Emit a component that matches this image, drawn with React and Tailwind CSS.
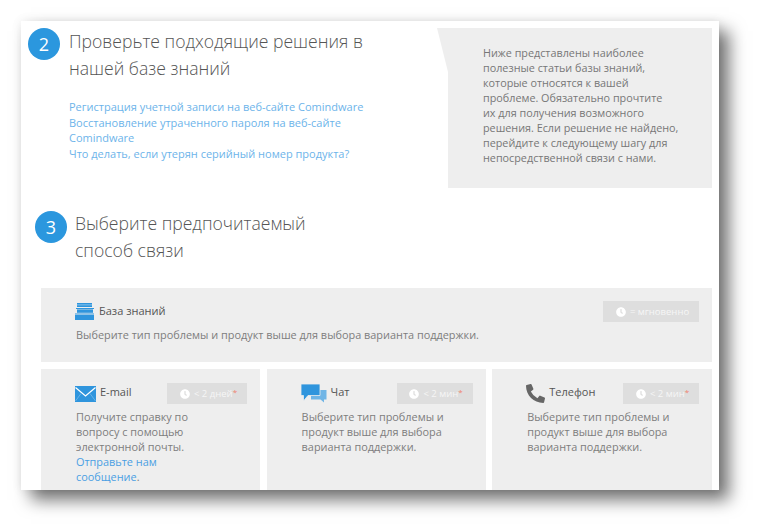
import React from "react";
import { FaClock, FaPhoneAlt } from "react-icons/fa";

const font = { fontFamily: '"Open Sans", sans-serif' };

function Step({ n, className }) {
  return (
    <div className={`w-8 h-8 shrink-0 rounded-full bg-[#2b97de] text-white flex items-center justify-center text-[18px] ${className || ""}`}>
      {n}
    </div>
  );
}

function Badge({ children, star, className }) {
  return (
    <div className={`h-[21px] bg-[#dedede] flex items-center justify-center gap-[4px] pl-[3px] text-[9.5px] text-[#f6f6f6] ${className || ""}`}>
      <FaClock className="w-[10px] h-[10px] text-white" />
      <span className="flex items-start leading-[14px]">
        {children}
        {star && <span className="text-[#f0836f] text-[8px] leading-[10px]">*</span>}
      </span>
    </div>
  );
}

function BooksIcon() {
  return (
    <svg width="20" height="17" viewBox="0 0 20 17" className="shrink-0">
      <rect x="2" y="0" width="15" height="4" fill="#2f95dd" />
      <rect x="2" y="1.5" width="15" height="0.8" fill="#9fd0f0" />
      <rect x="1" y="5" width="18" height="1" fill="#2f95dd" />
      <rect x="2" y="6.4" width="16" height="3.4" fill="#2f95dd" />
      <rect x="0" y="10.5" width="19" height="1" fill="#2f95dd" />
      <rect x="0" y="12" width="19" height="5" fill="#2f95dd" />
    </svg>
  );
}

function MailIcon() {
  return (
    <svg width="21" height="16" viewBox="0 0 21 16" className="shrink-0">
      <rect width="21" height="16" fill="#2f95dd" />
      <path d="M0.5 1.5 L10.5 10 L20.5 1.5" fill="none" stroke="#fff" strokeWidth="1.2" />
      <path d="M0.5 15 L6 7.5 M20.5 15 L15 7.5" stroke="#8cc6ec" strokeWidth="0.6" />
    </svg>
  );
}

function ChatIcon() {
  return (
    <svg width="26" height="19" viewBox="0 0 26 19" className="shrink-0">
      <path d="M10 6 H25.5 V15.5 H23 V18.5 L19.5 15.5 H10 Z" fill="#6fb5e6" />
      <path d="M0 0 H19 V11.5 H7 L2.5 17 V11.5 H0 Z" fill="#2f95dd" stroke="#eeeeee" strokeWidth="0.8" />
    </svg>
  );
}

function Option({ icon, title, badge, badgeWidth, titleGap, className, children }) {
  return (
    <div className={`bg-[#eeeeee] pl-[34px] pr-[13px] pt-[14px] ${className || ""}`}>
      <div className="flex items-center justify-between h-[21px]">
        <div className={`flex items-center ${titleGap}`}>
          {icon}
          <span className="text-[11px] text-[#555555] -mt-[2px]">{title}</span>
        </div>
        <Badge star className={badgeWidth}>{badge}</Badge>
      </div>
      <p className="mt-[5px] ml-px text-[10.9px] leading-[15px] text-[#7d7d7d]">{children}</p>
    </div>
  );
}

export default function App() {
  return (
    <div className="w-[761px] h-[532px] bg-white overflow-hidden pt-[21px] pl-[21px]" style={font}>
      <div className="w-[698px] h-[469px] bg-white overflow-hidden shadow-[10px_10px_16px_rgba(0,0,0,0.55),0_0_10px_rgba(0,0,0,0.08)]">
        <div className="flex justify-between pt-[7px] pl-[7px] pr-[7px]">
          <div className="flex">
            <Step n="2" />
            <div className="ml-[9px] w-[300px]">
              <h2 className="text-[17.6px] leading-[27px] font-light text-[#555555]">
                Проверьте подходящие решения в<br />нашей базе знаний
              </h2>
              <div className="mt-[17px] text-[11px] leading-[15.7px] text-[#6db4ea]">
                <div>Регистрация учетной записи на веб-сайте Comindware</div>
                <div>Восстановление утраченного пароля на веб-сайте<br />Comindware</div>
                <div>Что делать, если утерян серийный номер продукта?</div>
              </div>
            </div>
          </div>
          <div className="w-[275px] h-[160px] bg-[#eeeeee] pl-[46px] pt-[17px] [clip-path:polygon(0_0,100%_0,100%_100%,11px_100%,11px_44px)]">
            <p className="text-[10.8px] leading-[15px] text-[#777777]">
              Ниже представлены наиболее<br />
              полезные статьи базы знаний,<br />
              которые относятся к вашей<br />
              проблеме. Обязательно прочтите<br />
              их для получения возможного<br />
              решения. Если решение не найдено,<br />
              перейдите к следующему шагу для<br />
              непосредственной связи с нами.
            </p>
          </div>
        </div>

        <div className="flex mt-[23px] pl-[14px]">
          <Step n="3" />
          <h2 className="ml-[8px] -mt-[1px] text-[17.6px] leading-[27px] font-light text-[#555555]">
            Выберите предпочитаемый<br />способ связи
          </h2>
        </div>

        <div className="mt-[24px] ml-[20px] mr-[7px] flex flex-col gap-[7px]">
          <div className="bg-[#eeeeee] h-[74px] pl-[34px] pr-[13px] pt-[13px]">
            <div className="flex items-center justify-between h-[21px]">
              <div className="flex items-center gap-[4px]">
                <BooksIcon />
                <span className="text-[11px] text-[#555555]">База знаний</span>
              </div>
              <Badge className="w-[96px]">= мгновенно</Badge>
            </div>
            <p className="mt-[5px] ml-px text-[10.9px] leading-[15px] text-[#7d7d7d]">
              Выберите тип проблемы и продукт выше для выбора варианта поддержки.
            </p>
          </div>
          <div className="flex gap-[6.6px] h-[121px]">
            <Option className="w-[219px]" icon={<MailIcon />} title="E-mail" badge="< 2 дней" badgeWidth="w-[80px]" titleGap="gap-[4px]">
              Получите справку по<br />вопросу с помощью<br />электронной почты.<br />
              <span className="text-[#4a9fe3]">Отправьте нам<br />сообщение</span>.
            </Option>
            <Option className="w-[219px]" icon={<ChatIcon />} title="Чат" badge="< 2 мин" badgeWidth="w-[76px]" titleGap="gap-[4px]">
              Выберите тип проблемы и<br />продукт выше для выбора<br />варианта поддержки.
            </Option>
            <Option className="flex-1" icon={<FaPhoneAlt className="w-[19px] h-[19px] text-[#666666] shrink-0" />} title="Телефон" badge="< 2 мин" badgeWidth="w-[76px]" titleGap="gap-[4px]">
              Выберите тип проблемы и<br />продукт выше для выбора<br />варианта поддержки.
            </Option>
          </div>
        </div>
      </div>
    </div>
  );
}
